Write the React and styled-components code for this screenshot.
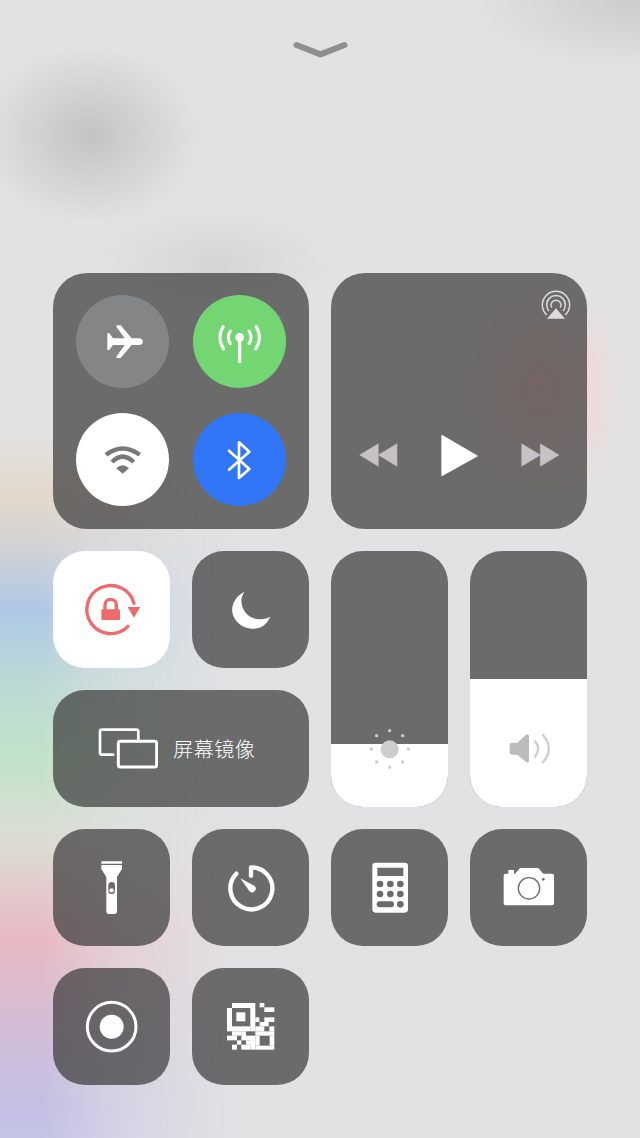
import React from "react";
import styled, { createGlobalStyle } from "styled-components";

const Global = createGlobalStyle`
  html, body { margin: 0; padding: 0; background: #e2e2e4; }
  body { font-family: "Noto Sans CJK SC", "Noto Sans", sans-serif; }
`;

const Page = styled.div`
  position: relative;
  width: 640px;
  height: 1138px;
  box-sizing: border-box;
  overflow: hidden;
  padding-top: 40px;
  display: flex;
  flex-direction: column;
  align-items: center;
  background:
    radial-gradient(ellipse 110px 90px at 90px 135px, rgba(185, 185, 185, 0.75), rgba(185, 185, 185, 0)),
    radial-gradient(ellipse 120px 55px at 215px 265px, rgba(205, 205, 205, 0.6), rgba(205, 205, 205, 0)),
    radial-gradient(ellipse 170px 70px at 640px 0px, rgba(200, 200, 200, 0.85), rgba(200, 200, 200, 0)),
    radial-gradient(ellipse 88px 120px at 540px 390px, rgba(255, 205, 200, 0.85), rgba(255, 205, 200, 0.5) 45%, rgba(255, 205, 200, 0)),
    #e2e2e4;

  &::before {
    content: "";
    position: absolute;
    left: 0;
    top: 430px;
    bottom: 0;
    width: 280px;
    background: linear-gradient(
      to bottom,
      #e2e2e4 0,
      #e3d8ca 65px,
      #d2d2d4 115px,
      #afc8e6 180px,
      #bcd8d6 250px,
      #c2e2c8 330px,
      #dcdcd4 410px,
      #e8b9c3 510px,
      #d4bcd4 590px,
      #c2c0e4 680px,
      #c4c2e6 708px
    );
    -webkit-mask-image: linear-gradient(to right, #000 15%, rgba(0, 0, 0, 0.45) 42%, transparent 85%);
    mask-image: linear-gradient(to right, #000 15%, rgba(0, 0, 0, 0.45) 42%, transparent 85%);
  }
`;

const Chevron = styled.svg`
  position: relative;
  width: 57px;
  height: 20px;
  flex: none;
`;

const Grid = styled.div`
  position: relative;
  margin-top: 213px;
  display: grid;
  grid-template-columns: repeat(4, 117px);
  grid-auto-rows: 117px;
  gap: 22px;
`;

const Tile = styled.div`
  grid-column: span ${(p) => p.$cols || 1};
  grid-row: span ${(p) => p.$rows || 1};
  border-radius: ${(p) => (p.$large ? 34 : 32)}px;
  background: ${(p) => (p.$active ? "#fff" : "rgba(45, 45, 45, 0.66)")};
  display: flex;
  align-items: center;
  justify-content: center;
`;

const Connectivity = styled(Tile)`
  display: grid;
  grid-template-columns: 93px 93px;
  grid-template-rows: 93px 93px;
  column-gap: 24px;
  row-gap: 25px;
  padding: 22px 23px;
  box-sizing: border-box;
  align-items: stretch;
  justify-content: stretch;
`;

const Round = styled.div`
  border-radius: 50%;
  background: ${(p) => p.$color};
  display: flex;
  align-items: center;
  justify-content: center;
`;

const Media = styled(Tile)`
  position: relative;
  flex-direction: column;
  justify-content: flex-end;
  align-items: stretch;
  padding: 0 27px 52px 28px;
`;

const AirPlay = styled.svg`
  position: absolute;
  top: 16px;
  right: 15px;
  width: 32px;
  height: 32px;
`;

const Transport = styled.div`
  display: flex;
  align-items: center;
  justify-content: space-between;
`;

const Mirror = styled(Tile)`
  justify-content: flex-start;
  padding-left: 45px;
  gap: 15px;
`;

const MirrorLabel = styled.span`
  color: #fff;
  font-size: 20px;
  font-weight: 300;
  letter-spacing: 0.5px;
  line-height: 1;
`;

const Slider = styled(Tile)`
  position: relative;
  overflow: hidden;
  flex-direction: column;
  justify-content: flex-end;
  align-items: stretch;
`;

const SliderFill = styled.div`
  height: ${(p) => p.$level}px;
  background: #fff;
`;

const SliderIcon = styled.svg`
  position: absolute;
  left: 50%;
  bottom: ${(p) => p.$bottom}px;
  transform: translateX(-50%);
`;

const Glyph = styled.svg`
  display: block;
  flex: none;
`;

function Icon({ box, children }) {
  const [, , w, h] = box.split(" ").map(Number);
  return (
    <Glyph viewBox={box} width={w / 3} height={h / 3}>
      {children}
    </Glyph>
  );
}

const QR_CELLS = [
  [30, 15, 70, 15], [15, 30, 15, 70], [85, 30, 15, 70], [30, 85, 55, 15],
  [43, 43, 27, 27],
  [113, 15, 14, 13], [127, 28, 30, 14],
  [100, 58, 12, 14], [127, 58, 30, 14], [113, 72, 27, 13],
  [100, 85, 27, 15], [142, 85, 15, 15],
  [100, 100, 57, 13], [100, 113, 13, 30], [143, 113, 14, 30], [100, 143, 57, 12],
  [30, 100, 28, 13], [58, 100, 14, 27], [15, 113, 30, 14], [72, 113, 28, 14],
  [45, 127, 13, 13], [72, 127, 28, 13], [30, 140, 15, 15], [58, 140, 27, 15], [85, 127, 15, 28],
];

const DARK = "#6b6b6b";

export default function App() {
  return (
    <Page>
      <Global />
      <Chevron viewBox="65 45 170 60">
        <path d="M78 60 L150 88 L222 60" fill="none" stroke="#8f8f91" strokeWidth="18" strokeLinecap="round" strokeLinejoin="round" />
      </Chevron>
      <Grid>
        <Connectivity $cols={2} $rows={2} $large>
          <Round $color="#848587">
            <Icon box="151 150 130 130">
              <path fill="#fff" d="M170 190 L176 190 L187 205 L222 205 L197 170 Q196 165 203 166 L210 166 L243 205 L268 205 Q277 208 277 215 Q277 222 268 225 L243 225 L210 264 L203 264 Q196 265 197 260 L222 225 L187 225 L176 240 L170 240 Z" />
            </Icon>
          </Round>
          <Round $color="#74d672">
            <Icon box="504 150 130 130">
              <circle cx="569" cy="202" r="13" fill="#fff" />
              <g fill="none" stroke="#fff" strokeLinecap="round">
                <path d="M569 205 V275" strokeWidth="10" />
                <path d="M519.5 170 A59 59 0 0 0 521 237 M618.5 170 A59 59 0 0 1 617 237" strokeWidth="9" />
                <path d="M541 183 A34 34 0 0 0 541 221 M597 183 A34 34 0 0 1 597 221" strokeWidth="9" />
              </g>
            </Icon>
          </Round>
          <Round $color="#fff">
            <Icon box="151 502 130 130">
              <path d="M166 552 Q216 515 267 552 M184 574 Q216 542 249 574" fill="none" stroke="#787878" strokeWidth="13" />
              <path d="M197 593 Q216 575 235 593 L216 609 Z" fill="#787878" />
            </Icon>
          </Round>
          <Round $color="#3176f6">
            <Icon box="504 502 130 130">
              <path d="M537 540 L598 595 L567 622 V515 L598 543 L537 597" fill="none" stroke="#fff" strokeWidth="8" strokeLinecap="round" strokeLinejoin="round" />
            </Icon>
          </Round>
        </Connectivity>

        <Media $cols={2} $rows={2} $large>
          <AirPlay viewBox="632 52 96 96">
            <g fill="none" stroke="#dcdcdc" strokeWidth="4.5">
              <path d="M652 130 A41 41 0 1 1 708 130" />
              <path d="M659 118 A28 28 0 1 1 701 118" />
              <path d="M667 108 A15 15 0 1 1 693 108" />
            </g>
            <path d="M653 141 L707 141 L680 110 Z" fill="#dcdcdc" />
          </AirPlay>
          <Transport>
            <Icon box="86 522 116 72">
              <path d="M88 558 L144 524 V592 Z M144 558 L200 524 V592 Z" fill="#c5c1c5" stroke="#c5c1c5" strokeWidth="1.5" strokeLinejoin="round" />
            </Icon>
            <Icon box="334 492 116 130">
              <path d="M340 497 L445 558 L340 616 Z" fill="#fff" stroke="#fff" strokeWidth="4" strokeLinejoin="round" />
            </Icon>
            <Icon box="575 522 116 72">
              <path d="M577 524 L633 558 L577 592 Z M633 524 L689 558 L633 592 Z" fill="#c5c1c5" stroke="#c5c1c5" strokeWidth="1.5" strokeLinejoin="round" />
            </Icon>
          </Transport>
        </Media>

        <Tile $active>
          <Icon box="94 95 180 180">
            <path d="M232 234 A72 72 0 1 1 250 165" fill="none" stroke="#ef6a6a" strokeWidth="10" strokeLinecap="round" />
            <path d="M231 176 L269 176 L250 208 Z" fill="#ef6a6a" />
            <path d="M163 185 V170 A17 17 0 0 1 197 170 V185" fill="none" stroke="#ef6a6a" strokeWidth="10" />
            <rect x="152" y="183" width="56" height="32" rx="4" fill="#ef6a6a" />
          </Icon>
        </Tile>
        <Tile>
          <Icon box="536 119 130 130">
            <path fill="#fff" d="M583 130 C 550 145 540 180 548 200 C 560 232 590 245 620 240 C 640 237 652 222 660 205 C 625 222 590 210 578 180 C 570 160 572 145 583 130 Z" />
          </Icon>
        </Tile>
        <Slider $rows={2}>
          <SliderFill $level={63} />
          <SliderIcon viewBox="117 85 120 120" width="40" height="40" $bottom={38}>
            <circle cx="176" cy="146" r="27" fill="#cdcdcd" />
            <g fill="#cdcdcd">
              <circle cx="176" cy="90" r="5" />
              <circle cx="215" cy="105" r="5" />
              <circle cx="232" cy="145" r="5" />
              <circle cx="215" cy="184" r="5" />
              <circle cx="176" cy="200" r="5" />
              <circle cx="137" cy="184" r="5" />
              <circle cx="121" cy="145" r="5" />
              <circle cx="137" cy="105" r="5" />
            </g>
          </SliderIcon>
        </Slider>
        <Slider $rows={2}>
          <SliderFill $level={128} />
          <SliderIcon viewBox="530 96 130 100" width="43.33" height="33.33" $bottom={41.7}>
            <path fill="#bcbcbc" d="M537 134 Q537 128 545 128 H560 L585 105 Q595 98 595 110 V180 Q595 192 585 185 L560 164 H545 Q537 164 537 158 Z" />
            <path d="M613 124 Q632 146 613 170 M637 105 Q672 146 637 187" fill="none" stroke="#cfcfcf" strokeWidth="7" strokeLinecap="round" />
          </SliderIcon>
        </Slider>
        <Mirror $cols={2}>
          <Icon box="141 540 181 122">
            <path d="M190 620 H153 Q147 620 147 614 V551 Q147 545 153 545 H256 Q262 545 262 551 V577" fill="none" stroke="#fff" strokeWidth="8" />
            <rect x="202" y="580" width="115" height="77" rx="6" fill="none" stroke="#fff" strokeWidth="9" />
          </Icon>
          <MirrorLabel>屏幕镜像</MirrorLabel>
        </Mirror>

        <Tile>
          <Icon box="119 95 130 178">
            <path fill="#fff" d="M153 105 H215 V112 H153 Z M153 116 H215 V128 L200 152 V255 Q200 263 192 263 H176 Q168 263 168 255 V152 L153 128 Z" />
            <rect x="174" y="167" width="20" height="36" rx="10" fill={DARK} />
            <circle cx="184" cy="192" r="6.5" fill="#fff" />
          </Icon>
        </Tile>
        <Tile>
          <Icon box="526 109 150 150">
            <path d="M601 147 V122 A63 63 0 1 1 557 141" fill="none" stroke="#fff" strokeWidth="13" strokeLinecap="round" strokeLinejoin="round" />
            <path fill="#fff" d="M569 155 L612 178 A10 10 0 1 1 596 193 Z" />
          </Icon>
        </Tile>
        <Tile>
          <Icon box="118 105 120 160">
            <rect x="125" y="110" width="107" height="150" rx="10" fill="#fff" />
            <rect x="140" y="125" width="78" height="25" rx="2" fill={DARK} />
            <g fill={DARK}>
              <circle cx="148" cy="174" r="10" />
              <circle cx="179" cy="174" r="10" />
              <circle cx="209" cy="174" r="10" />
              <circle cx="148" cy="204" r="10" />
              <circle cx="179" cy="204" r="10" />
              <circle cx="209" cy="204" r="10" />
              <rect x="138" y="226" width="52" height="18" rx="9" />
              <circle cx="209" cy="235" r="10" />
            </g>
          </Icon>
        </Tile>
        <Tile>
          <Icon box="516 119 160 130">
            <path fill="#fff" d="M535 131 H552 V142 H555 L570 125 H625 L640 142 H666 Q672 142 672 148 V231 Q672 237 666 237 H527 Q521 237 521 231 V148 Q521 142 527 142 H535 Z" />
            <circle cx="597" cy="186" r="32" fill="#fff" stroke={DARK} strokeWidth="4" />
            <circle cx="640" cy="159" r="4" fill={DARK} />
          </Icon>
        </Tile>

        <Tile>
          <Icon box="104 521 160 160">
            <circle cx="184" cy="601" r="73" fill="none" stroke="#fff" strokeWidth="9" />
            <circle cx="184" cy="601" r="36" fill="#fff" />
          </Icon>
        </Tile>
        <Tile>
          <Icon box="0 0 171 171">
            <g fill="#fff">
              {QR_CELLS.map(([x, y, w, h]) => (
                <rect key={`${x}-${y}`} x={x} y={y} width={w} height={h} />
              ))}
            </g>
          </Icon>
        </Tile>
      </Grid>
    </Page>
  );
}
